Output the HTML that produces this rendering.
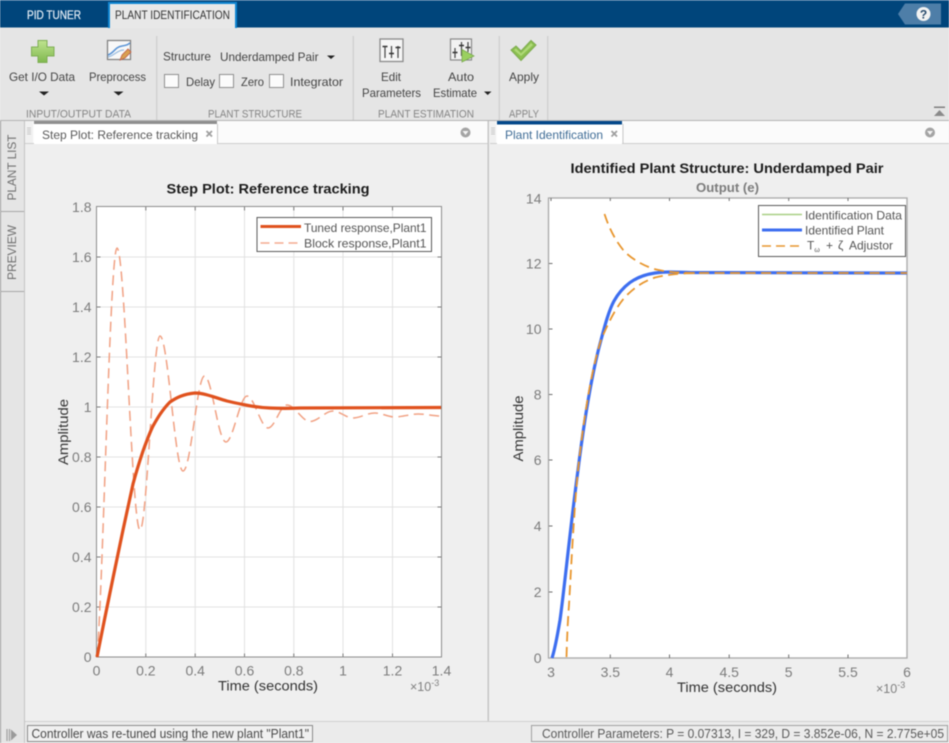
<!DOCTYPE html>
<html><head><meta charset="utf-8"><style>
html,body{margin:0;padding:0;background:#efefef;width:949px;height:743px;overflow:hidden}
svg{display:block;filter:blur(.5px)}
text{font-family:"Liberation Sans",sans-serif;font-size:12px;fill:#444}
.g{font-size:11px;fill:#858585}
.t{font-size:14px;fill:#7c7c7c}
.e{text-anchor:end}.m{text-anchor:middle}
.l{font-size:12px;fill:#555}
</style></head><body>
<svg width="949" height="743" viewBox="0 0 949 743" xmlns="http://www.w3.org/2000/svg">
<defs>
<linearGradient id="gr" x1="0" y1="0" x2="0" y2="1"><stop offset="0" stop-color="#bfe38f"/><stop offset="1" stop-color="#80b94f"/></linearGradient>
</defs>
<!-- backgrounds -->
<rect width="949" height="743" fill="#efefef"/>
<rect width="949" height="28" fill="#00457b"/>
<rect y="0" width="949" height="1" fill="#2a6496"/>
<rect y="27.500" width="949" height="94" fill="#e5e5e5"/>
<rect y="120" width="949" height="1.500" fill="#b4b4b4"/>
<!-- ribbon tabs -->
<rect x="108" y="2" width="129" height="26" fill="#0f86d2"/>
<rect x="110" y="4" width="125" height="24" fill="#e8e8e8"/>
<text x="27" y="19" textLength="54" lengthAdjust="spacingAndGlyphs" style="font-size:12px;fill:#e4edf5;stroke:#e4edf5;stroke-width:.25">PID TUNER</text>
<text x="115" y="19" textLength="115" lengthAdjust="spacingAndGlyphs" style="font-size:12px;fill:#333">PLANT IDENTIFICATION</text>
<!-- help -->
<path d="M905 3.500H941V24.500H905L898 14Z" fill="#4e7ea8"/>
<circle cx="923.500" cy="14" r="7" fill="#f2f2f2"/>
<text x="923.500" y="18.500" class="m" style="font-size:12px;font-weight:bold;fill:#27496b">?</text>
<!-- group seps -->
<g fill="#d2d2d2"><rect x="156" y="36" width="1.500" height="84"/><rect x="352.500" y="36" width="1.500" height="84"/><rect x="498.500" y="36" width="1.500" height="84"/><rect x="547" y="36" width="1.500" height="84"/></g>
<!-- plus icon -->
<path d="M38 40.500H47V47H54V56H47V62.500H38V56H31.500V47H38Z" fill="url(#gr)" stroke="#7fae55" stroke-width="1"/>
<!-- preprocess icon -->
<rect x="107.500" y="40.500" width="23" height="19" fill="#f8f8f8" stroke="#7d7d7d" stroke-width="1.200"/>
<path d="M108 55C114 53 115 47 122 46S128 44 130 43" fill="none" stroke="#5a94d6" stroke-width="1.600"/>
<path d="M108 57C114 56 117 50 124 50" fill="none" stroke="#9bbde0" stroke-width="1.200"/>
<path d="M120 60L122 55L128 49L131 52L125 58Z" fill="#d8a050" stroke="#c0604a" stroke-width=".8"/>
<!-- labels -->
<text x="9" y="81" textLength="66" lengthAdjust="spacingAndGlyphs">Get I/O Data</text>
<text x="89" y="81" textLength="57" lengthAdjust="spacingAndGlyphs">Preprocess</text>
<path d="M39 91.500H49L44 95.500ZM113.500 91.500H123.500L118.500 95.500Z" fill="#222"/>
<text x="163" y="60.500" textLength="48" lengthAdjust="spacingAndGlyphs">Structure</text>
<text x="220" y="61" textLength="98.500" lengthAdjust="spacingAndGlyphs">Underdamped Pair</text>
<path d="M327 55.500H335L331 59Z" fill="#222"/>
<g fill="#fbfbfb" stroke="#8f8f8f"><rect x="164.500" y="74.500" width="14" height="13"/><rect x="219.500" y="74.500" width="14" height="13"/><rect x="269.500" y="74.500" width="14" height="13"/></g>
<text x="186" y="86" textLength="29" lengthAdjust="spacingAndGlyphs">Delay</text>
<text x="241" y="86" textLength="23" lengthAdjust="spacingAndGlyphs">Zero</text>
<text x="290" y="86" textLength="53" lengthAdjust="spacingAndGlyphs">Integrator</text>
<text x="26" y="117.500" class="g" textLength="105" lengthAdjust="spacingAndGlyphs">INPUT/OUTPUT DATA</text>
<text x="208" y="117.500" class="g" textLength="94" lengthAdjust="spacingAndGlyphs">PLANT STRUCTURE</text>
<text x="378" y="117.500" class="g" textLength="96" lengthAdjust="spacingAndGlyphs">PLANT ESTIMATION</text>
<text x="509" y="117.500" class="g" textLength="30" lengthAdjust="spacingAndGlyphs">APPLY</text>
<!-- edit params icon -->
<rect x="380" y="39" width="23" height="22.500" fill="#f6f6f6" stroke="#8a8a8a" stroke-width="1.300"/>
<path d="M385 46V58M391.500 46V58M398 46V58" stroke="#444" stroke-width="1.200" fill="none"/>
<path d="M382.500 46.500H387.500M389 53.500H394M395.500 47.500H400.500" stroke="#333" stroke-width="1.400" fill="none"/>
<text x="381" y="81" textLength="20" lengthAdjust="spacingAndGlyphs">Edit</text>
<text x="362" y="97" textLength="59" lengthAdjust="spacingAndGlyphs">Parameters</text>
<!-- auto icon -->
<rect x="450.500" y="39" width="21" height="21" fill="#f2f2f2" stroke="#8a8a8a" stroke-width="1.200"/>
<path d="M455 48V58M461.500 42V56M468 42V52" stroke="#444" stroke-width="1.200" fill="none"/>
<path d="M452.500 52.500H457.500M459 45.500H464M465.500 47.500H470.500" stroke="#333" stroke-width="1.400" fill="none"/>
<path d="M462 49.500L474 56L462 62Z" fill="#9ad060" stroke="#7aa94f" stroke-width=".8"/>
<text x="448" y="81" textLength="26" lengthAdjust="spacingAndGlyphs">Auto</text>
<text x="433" y="97" textLength="44" lengthAdjust="spacingAndGlyphs">Estimate</text>
<path d="M484 91.500H491.500L487.700 95Z" fill="#222"/>
<!-- check -->
<path d="M511 50L516 46L521 51L531 40.500L536 45L521 60.500Z" fill="#8cc050" stroke="#7dab50" stroke-width="1"/>
<path d="M514 50L516 48.500L521 53.500L531 43L533 45L521 56Z" fill="#afd978"/>
<text x="509" y="81" textLength="30" lengthAdjust="spacingAndGlyphs">Apply</text>
<!-- collapse -->
<rect x="934" y="106.500" width="11" height="1.500" fill="#7f7f7f"/>
<path d="M934 116H945L939.500 110Z" fill="#8a8a8a"/>

<!-- sidebar -->
<rect x="0" y="121" width="24" height="622" fill="#e5e5e5"/>
<rect x="24" y="121" width="1" height="622" fill="#c4c4c4"/>
<rect x="0" y="121" width="1" height="622" fill="#9a9a9a"/>
<rect x="0" y="211" width="24" height="1" fill="#a8a8a8"/>
<rect x="0" y="291" width="24" height="1" fill="#a8a8a8"/>
<text transform="translate(16,200.500) rotate(-90)" textLength="66" lengthAdjust="spacingAndGlyphs" style="font-size:12px;fill:#707070">PLANT LIST</text>
<text transform="translate(16,280) rotate(-90)" textLength="55" lengthAdjust="spacingAndGlyphs" style="font-size:12px;fill:#707070">PREVIEW</text>

<!-- tab strips -->
<rect x="25" y="121" width="463" height="22" fill="#fbfbfb"/>
<rect x="490" y="121" width="459" height="22" fill="#fbfbfb"/>
<rect x="25" y="143" width="463" height="1" fill="#cfcfcf"/>
<rect x="490" y="143" width="459" height="1" fill="#cfcfcf"/>
<rect x="487.500" y="121" width="1.500" height="601" fill="#c6c6c6"/>
<rect x="25" y="121" width="8" height="22" fill="#f1f1f1"/>
<rect x="489" y="121" width="7" height="22" fill="#f1f1f1"/>
<path d="M27 128H31M27 130H31M27 132H31M27 134H31M491 128H495M491 130H495M491 132H495M491 134H495" stroke="#c8c8c8" stroke-width="1"/>
<rect x="34" y="121" width="183" height="3" fill="#8f8f8f"/>
<rect x="34" y="124" width="183" height="20" fill="#fff"/>
<rect x="217" y="124" width="1" height="20" fill="#c8c8c8"/>
<rect x="497" y="121" width="125" height="3.500" fill="#04488a"/>
<rect x="497" y="124.500" width="125" height="19.500" fill="#fff"/>
<rect x="622.500" y="124" width="1" height="20" fill="#c8c8c8"/>
<text x="42" y="139" textLength="156" lengthAdjust="spacingAndGlyphs" style="font-size:12px;fill:#5a5a5a">Step Plot: Reference tracking</text>
<text x="505" y="139" textLength="98" lengthAdjust="spacingAndGlyphs" style="font-size:12px;fill:#3f6c96">Plant Identification</text>
<path d="M206.500 131L212 136.500M212 131L206.500 136.500M611.500 131L617 136.500M617 131L611.500 136.500" stroke="#a0a0a0" stroke-width="1.800"/>
<circle cx="465.500" cy="132.500" r="5" fill="#a4a4a4"/><path d="M462.500 131H468.500L465.500 135Z" fill="#f4f4f4"/>
<circle cx="930" cy="132.500" r="5" fill="#a4a4a4"/><path d="M927 131H933L930 135Z" fill="#f4f4f4"/>

<!-- LEFT AXES -->
<text x="268" y="193.500" class="m" textLength="203" lengthAdjust="spacingAndGlyphs" style="font-size:13.500px;font-weight:bold;fill:#1c1c1c">Step Plot: Reference tracking</text>
<rect x="96.500" y="206.500" width="345" height="450.500" fill="#fff"/>
<path d="M145.800 207V657M195.200 207V657M244.500 207V657M293.800 207V657M343 207V657M392.500 207V657M97 257H441M97 307H441M97 357H441M97 407H441M97 457H441M97 507H441M97 557H441M97 607H441" stroke="#e2e2e2" stroke-width="1" fill="none"/>
<path d="M145.800 207v3.500M195.200 207v3.500M244.500 207v3.500M293.800 207v3.500M343 207v3.500M392.500 207v3.500M145.800 657v-3.500M195.200 657v-3.500M244.500 657v-3.500M293.800 657v-3.500M343 657v-3.500M392.500 657v-3.500M97 257h3.500M97 307h3.500M97 357h3.500M97 407h3.500M97 457h3.500M97 507h3.500M97 557h3.500M97 607h3.500M441 257h-3.500M441 307h-3.500M441 357h-3.500M441 407h-3.500M441 457h-3.500M441 507h-3.500M441 557h-3.500M441 607h-3.500" stroke="#7a7a7a" stroke-width="1" fill="none"/>
<rect x="96.500" y="206.500" width="345" height="450.500" fill="none" stroke="#8c8c8c" stroke-width="1"/>
<g>
<text class="t e" x="91.500" y="212">1.8</text><text class="t e" x="91.500" y="262">1.6</text><text class="t e" x="91.500" y="312">1.4</text><text class="t e" x="91.500" y="362">1.2</text><text class="t e" x="91.500" y="412">1</text><text class="t e" x="91.500" y="462">0.8</text><text class="t e" x="91.500" y="512">0.6</text><text class="t e" x="91.500" y="562">0.4</text><text class="t e" x="91.500" y="612">0.2</text><text class="t e" x="91.500" y="662">0</text>
<text class="t m" x="96.500" y="675.500">0</text><text class="t m" x="145.800" y="675.500">0.2</text><text class="t m" x="195.200" y="675.500">0.4</text><text class="t m" x="244.500" y="675.500">0.6</text><text class="t m" x="293.800" y="675.500">0.8</text><text class="t m" x="343" y="675.500">1</text><text class="t m" x="392.500" y="675.500">1.2</text><text class="t m" x="441.500" y="675.500">1.4</text>
</g>
<text x="218" y="690.500" textLength="100" lengthAdjust="spacingAndGlyphs" style="font-size:14px;fill:#333">Time (seconds)</text>
<text transform="translate(68,465) rotate(-90)" textLength="66" lengthAdjust="spacingAndGlyphs" style="font-size:14px;fill:#333">Amplitude</text>
<text x="410" y="691" style="font-size:12.500px;fill:#808080">×10<tspan dy="-5" style="font-size:9px">-3</tspan></text>
<!-- left curves -->
<path d="M97 657C103 590 110 248 117 248C125 248 132 530 140 530C147 530 153 336 160 336C168 336 175 471 183 471C191 471 197 376 204.500 376C212 376 218 442 226 442C233 442 240 396 247 396C254 396 261 428 268 428C275 428 280 405 287 405C295 405 302 421.500 310 421.500C318 421.500 325 411 333 411C340 411 346 418 353 418C360 418 367 413 375 413C382 413 388 417 395 417C402 417 410 414 418 414C426 414 433 416 441 416" fill="none" stroke="#f1a183" stroke-width="1.500" stroke-dasharray="10 5.500"/>
<path d="M97 657L104 622L113 578L123 530L133 484C137 469 140 460 143 451C147 440 150 432 153 426C157 419 162 410 170 402C176 398 183 394 195 393C205 393 216 398 227 401C233 402.500 238 403.500 243 404.500C250 406 258 407.500 270 408C280 408.500 290 408.500 300 408C320 407.500 380 407.500 441 407.500" fill="none" stroke="#e0521e" stroke-width="3.200"/>
<!-- left legend -->
<rect x="257" y="217.500" width="174.500" height="34" fill="#fff" stroke="#5a5a5a" stroke-width="1"/>
<path d="M260.500 226.500H301" stroke="#e0521e" stroke-width="3"/>
<path d="M260.500 243H301" stroke="#f5ab8f" stroke-width="1.500" stroke-dasharray="9 5"/>
<text x="304" y="232" class="l" textLength="122.500" lengthAdjust="spacingAndGlyphs">Tuned response,Plant1</text>
<text x="304" y="247.500" class="l" textLength="122.500" lengthAdjust="spacingAndGlyphs">Block response,Plant1</text>

<!-- RIGHT AXES -->
<text x="727" y="173" class="m" textLength="313" lengthAdjust="spacingAndGlyphs" style="font-size:13.500px;font-weight:bold;fill:#1c1c1c">Identified Plant Structure: Underdamped Pair</text>
<text x="696" y="192" textLength="63" lengthAdjust="spacingAndGlyphs" style="font-size:12.500px;font-weight:bold;fill:#7c7c7c">Output (e)</text>
<rect x="548.500" y="198" width="358.500" height="460" fill="#fff" stroke="#a8a8a8" stroke-width="1.300"/>
<path d="M551 198v3M610.300 198v3M669.500 198v3M729.200 198v3M788.700 198v3M848 198v3M610.300 658v-3.500M669.500 658v-3.500M729.200 658v-3.500M788.700 658v-3.500M848 658v-3.500M549 263.500h3.500M549 329h3.500M549 394.500h3.500M549 460h3.500M549 526h3.500M549 592h3.500" stroke="#6e6e6e" stroke-width="1" fill="none"/>
<g>
<text class="t e" x="541.500" y="203.500">14</text><text class="t e" x="541.500" y="268.500">12</text><text class="t e" x="541.500" y="334">10</text><text class="t e" x="541.500" y="399.500">8</text><text class="t e" x="541.500" y="465">6</text><text class="t e" x="541.500" y="531">4</text><text class="t e" x="541.500" y="597">2</text><text class="t e" x="541.500" y="663">0</text>
<text class="t m" x="551" y="677">3</text><text class="t m" x="610.300" y="677">3.5</text><text class="t m" x="669.500" y="677">4</text><text class="t m" x="729.200" y="677">4.5</text><text class="t m" x="788.700" y="677">5</text><text class="t m" x="848" y="677">5.5</text><text class="t m" x="907" y="677">6</text>
</g>
<text x="677" y="692" textLength="100" lengthAdjust="spacingAndGlyphs" style="font-size:14px;fill:#333">Time (seconds)</text>
<text transform="translate(523,461.500) rotate(-90)" textLength="66" lengthAdjust="spacingAndGlyphs" style="font-size:14px;fill:#333">Amplitude</text>
<text x="876" y="693" style="font-size:12.500px;fill:#808080">×10<tspan dy="-5" style="font-size:9px">-3</tspan></text>
<!-- right curves -->
<path d="M552 658C554 652 557 638 560 620C564 592 570 530 578 470C583 430 590 380 601 340C605 325 609 310 614 301C619 292 624 287 630 282.500C637 277.500 645 274.500 655 273C665 271.500 675 272 690 272.500C730 273 820 273 907 273" fill="none" stroke="#3d6ef0" stroke-width="3.200"/>
<path d="M566.500 657C567 640 567.500 625 569 605C571 570 574 510 578 470C583 425 590 375 601 340C607 326 614 310 625 297C634 288 642 282 655 277.500C670 274 685 273 700 273L907 273" fill="none" stroke="#e8962e" stroke-width="1.800" stroke-dasharray="10 5.500"/>
<path d="M604.500 214C609 228 615 240 624 251C632 259 642 265 654 269C665 272 680 273 700 273" fill="none" stroke="#e8962e" stroke-width="1.800" stroke-dasharray="10 5.500"/>
<!-- right legend -->
<rect x="758.500" y="205.500" width="147" height="51" fill="#fff" stroke="#5a5a5a" stroke-width="1"/>
<path d="M762 214.500H802" stroke="#a9cf84" stroke-width="1.500"/>
<path d="M762 230H802" stroke="#3d6ef0" stroke-width="3"/>
<path d="M762 246H802" stroke="#e8962e" stroke-width="1.600" stroke-dasharray="9 5"/>
<text x="805" y="219.500" class="l" textLength="97" lengthAdjust="spacingAndGlyphs">Identification Data</text>
<text x="805" y="234.500" class="l" textLength="79" lengthAdjust="spacingAndGlyphs">Identified Plant</text>
<text x="807" y="249.500" class="l">T<tspan dy="2.500" style="font-size:7px">ω</tspan></text>
<text x="826" y="249.500" class="l">+</text>
<text x="838" y="249.500" class="l">ζ</text>
<text x="849" y="249.500" class="l" textLength="44" lengthAdjust="spacingAndGlyphs">Adjustor</text>

<!-- status bar -->
<rect x="25" y="721" width="924" height="22" fill="#ebebeb"/>
<rect x="25" y="721" width="924" height="1" fill="#cfcfcf"/>
<path d="M7 729V741M9.500 729V741" stroke="#a0a0a0" stroke-width="1.200"/>
<path d="M11 729.500L17 735L11 740.500Z" fill="#9a9a9a"/>
<rect x="27.500" y="725.500" width="285" height="16" fill="#f0f0f0" stroke="#8c8c8c"/>
<rect x="531.500" y="725.500" width="416" height="16" fill="#ececec" stroke="#a0a0a0"/>
<text x="31.500" y="738" textLength="277.500" lengthAdjust="spacingAndGlyphs" style="font-size:12.500px;fill:#4a4a4a">Controller was re-tuned using the new plant "Plant1"</text>
<text x="542" y="738" textLength="402" lengthAdjust="spacingAndGlyphs" style="font-size:12.500px;fill:#5a5a5a">Controller Parameters: P = 0.07313, I = 329, D = 3.852e-06, N = 2.775e+05</text>
</svg>
</body></html>
